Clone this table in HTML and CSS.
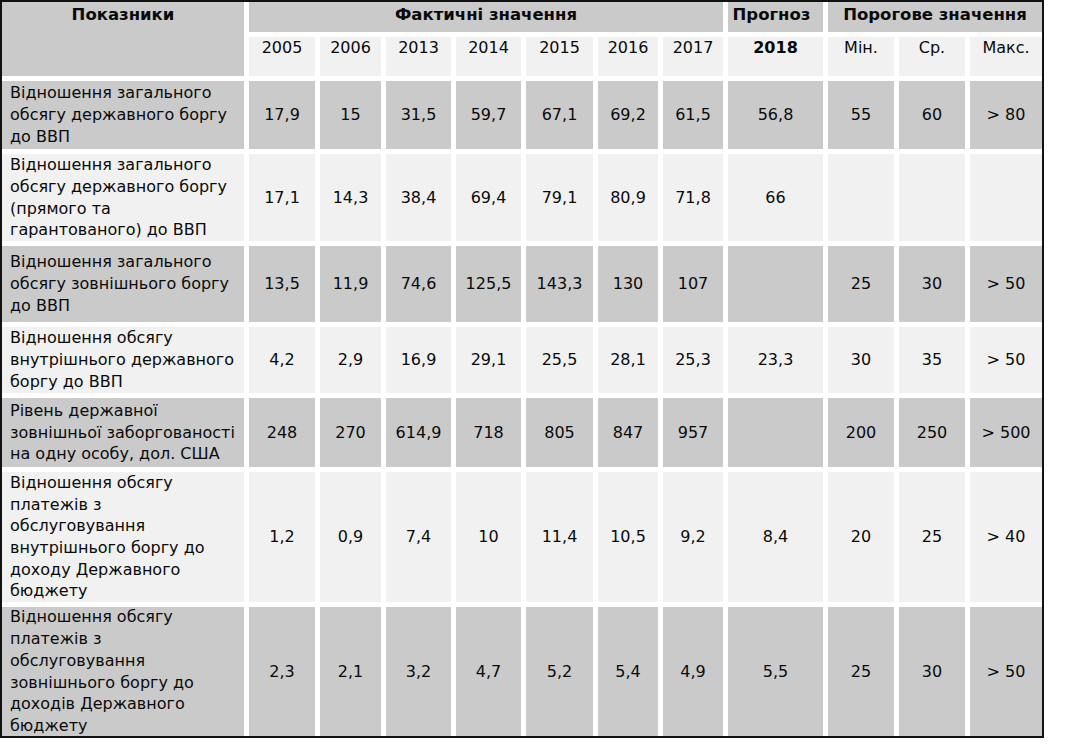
FILE: index.html
```html
<!DOCTYPE html>
<html lang="uk">
<head>
<meta charset="utf-8">
<title>Показники боргової безпеки</title>
<link rel="stylesheet" href="styles.css">
</head>
<body>
<div class="frame">
  <div class="grid">
    <div class="cell dark head name">Показники</div>
    <div class="cell dark head fact">Фактичні значення</div>
    <div class="cell dark head prog">Прогноз</div>
    <div class="cell dark head thr">Порогове значення</div>

    <div class="cell light year">2005</div>
    <div class="cell light year">2006</div>
    <div class="cell light year">2013</div>
    <div class="cell light year">2014</div>
    <div class="cell light year">2015</div>
    <div class="cell light year">2016</div>
    <div class="cell light year">2017</div>
    <div class="cell light year bold">2018</div>
    <div class="cell light year">Мін.</div>
    <div class="cell light year">Ср.</div>
    <div class="cell light year">Макс.</div>

    <div class="cell dark label">Відношення загального<br>обсягу державного боргу<br>до ВВП</div>
    <div class="cell dark num">17,9</div><div class="cell dark num">15</div><div class="cell dark num">31,5</div><div class="cell dark num">59,7</div><div class="cell dark num">67,1</div><div class="cell dark num">69,2</div><div class="cell dark num">61,5</div><div class="cell dark num">56,8</div><div class="cell dark num">55</div><div class="cell dark num">60</div><div class="cell dark num">&gt; 80</div>

    <div class="cell light label">Відношення загального<br>обсягу державного боргу<br>(прямого та<br>гарантованого) до ВВП</div>
    <div class="cell light num">17,1</div><div class="cell light num">14,3</div><div class="cell light num">38,4</div><div class="cell light num">69,4</div><div class="cell light num">79,1</div><div class="cell light num">80,9</div><div class="cell light num">71,8</div><div class="cell light num">66</div><div class="cell light num"></div><div class="cell light num"></div><div class="cell light num"></div>

    <div class="cell dark label">Відношення загального<br>обсягу зовнішнього боргу<br>до ВВП</div>
    <div class="cell dark num">13,5</div><div class="cell dark num">11,9</div><div class="cell dark num">74,6</div><div class="cell dark num">125,5</div><div class="cell dark num">143,3</div><div class="cell dark num">130</div><div class="cell dark num">107</div><div class="cell dark num"></div><div class="cell dark num">25</div><div class="cell dark num">30</div><div class="cell dark num">&gt; 50</div>

    <div class="cell light label">Відношення обсягу<br>внутрішнього державного<br>боргу до ВВП</div>
    <div class="cell light num">4,2</div><div class="cell light num">2,9</div><div class="cell light num">16,9</div><div class="cell light num">29,1</div><div class="cell light num">25,5</div><div class="cell light num">28,1</div><div class="cell light num">25,3</div><div class="cell light num">23,3</div><div class="cell light num">30</div><div class="cell light num">35</div><div class="cell light num">&gt; 50</div>

    <div class="cell dark label">Рівень державної<br>зовнішньої заборгованості<br>на одну особу, дол. США</div>
    <div class="cell dark num">248</div><div class="cell dark num">270</div><div class="cell dark num">614,9</div><div class="cell dark num">718</div><div class="cell dark num">805</div><div class="cell dark num">847</div><div class="cell dark num">957</div><div class="cell dark num"></div><div class="cell dark num">200</div><div class="cell dark num">250</div><div class="cell dark num">&gt; 500</div>

    <div class="cell light label">Відношення обсягу<br>платежів з<br>обслуговування<br>внутрішнього боргу до<br>доходу Державного<br>бюджету</div>
    <div class="cell light num">1,2</div><div class="cell light num">0,9</div><div class="cell light num">7,4</div><div class="cell light num">10</div><div class="cell light num">11,4</div><div class="cell light num">10,5</div><div class="cell light num">9,2</div><div class="cell light num">8,4</div><div class="cell light num">20</div><div class="cell light num">25</div><div class="cell light num">&gt; 40</div>

    <div class="cell dark label">Відношення обсягу<br>платежів з<br>обслуговування<br>зовнішнього боргу до<br>доходів Державного<br>бюджету</div>
    <div class="cell dark num">2,3</div><div class="cell dark num">2,1</div><div class="cell dark num">3,2</div><div class="cell dark num">4,7</div><div class="cell dark num">5,2</div><div class="cell dark num">5,4</div><div class="cell dark num">4,9</div><div class="cell dark num">5,5</div><div class="cell dark num">25</div><div class="cell dark num">30</div><div class="cell dark num">&gt; 50</div>
  </div>
</div>
</body>
</html>
```
FILE: styles.css
```css
html, body {
  margin: 0;
  padding: 0;
  background: #ffffff;
}

body {
  font-family: "DejaVu Sans", "Liberation Sans", sans-serif;
  font-size: 16px;
  color: #0a0a0a;
}

.frame {
  width: 1040px;
  border: 2px solid #111111;
  background: #ffffff;
}

.grid {
  display: grid;
  grid-template-columns: 242px 66px 61px 65px 65px 67px 60px 60px 95px 66px 66px 72px;
  grid-template-rows: 30px 39px 68px 87px 76px 66px 69px 130px 129px;
  gap: 5px;
}

.cell {
  line-height: 21.7px;
  white-space: nowrap;
  overflow: hidden;
}

.dark {
  background: #cacaca;
}

.light {
  background: #f1f1f1;
}

.head {
  font-weight: bold;
  font-size: 16.5px;
  text-align: center;
  padding-top: 2px;
}

.name {
  grid-row: 1 / span 2;
}

.fact {
  grid-column: 2 / span 7;
}

.prog {
  grid-column: 9;
  padding-right: 8px;
}

.thr {
  grid-column: 10 / span 3;
}

.year {
  text-align: center;
}

.bold {
  font-weight: bold;
}

.label {
  display: flex;
  align-items: center;
  padding-left: 8px;
}

.num {
  display: flex;
  align-items: center;
  justify-content: center;
}
```
